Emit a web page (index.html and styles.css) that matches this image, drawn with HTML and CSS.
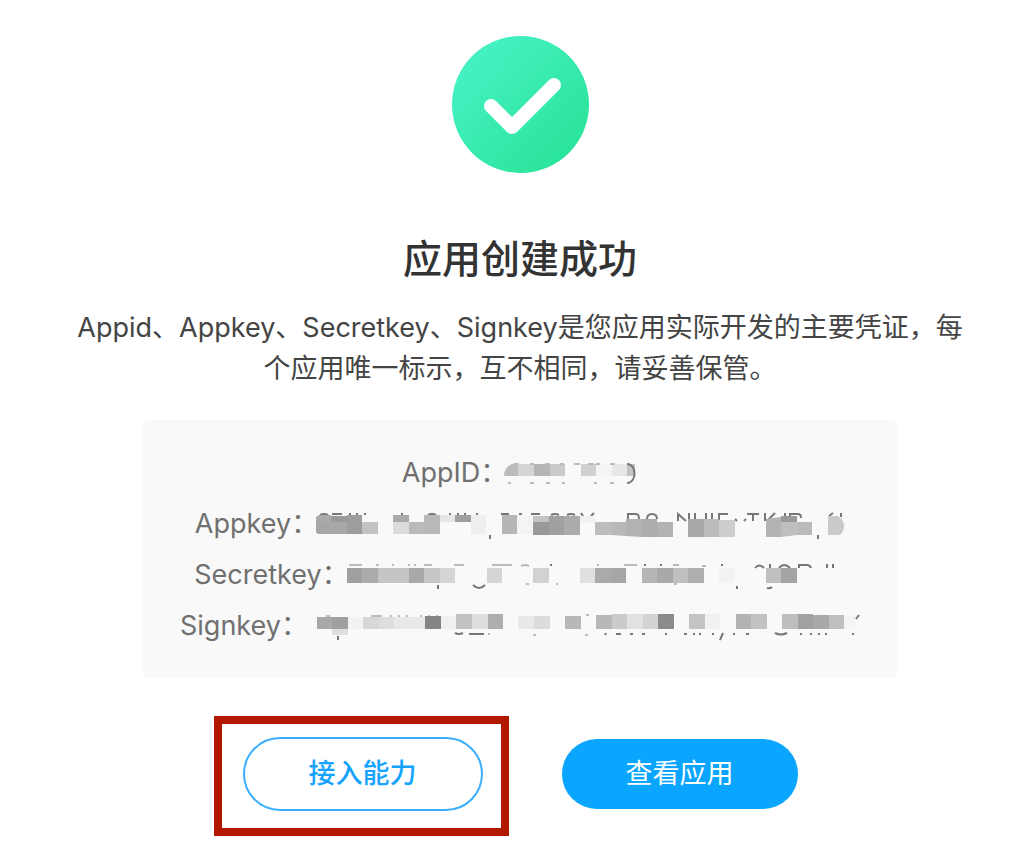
FILE: index.html
```html
<!DOCTYPE html>
<html lang="zh-CN">
<head>
  <meta charset="UTF-8" />
  <meta name="viewport" content="width=device-width, initial-scale=1.0"/>
  <title>应用创建成功</title>
  <link rel="stylesheet" href="styles.css">
</head>
<body>
  <main class="result">
    <svg class="success-icon" viewBox="0 0 137 137" aria-hidden="true">
      <defs>
        <linearGradient id="green" x1="0.1" y1="0.1" x2="0.9" y2="0.9">
          <stop offset="0" stop-color="#46f2c4"/>
          <stop offset="1" stop-color="#29e399"/>
        </linearGradient>
      </defs>
      <circle cx="68.5" cy="68.5" r="68.5" fill="url(#green)"/>
      <path d="M39 70 L60 91 L102 49" fill="none" stroke="#fff" stroke-width="14" stroke-linecap="round" stroke-linejoin="round"/>
    </svg>

    <h1>应用创建成功</h1>
    <p class="desc">Appid、Appkey、Secretkey、Signkey是您应用实际开发的主要凭证，每个应用唯一标示，互不相同，请妥善保管。</p>

    <!-- values are masked -->
    <dl class="keys">
      <div class="key-row">
        <dt>AppID：</dt>
        <dd>
          <svg width="134" height="34" viewBox="0 0 134 34" aria-hidden="true">
            <path d="M0 20 C0 13 5 7 14 7 V20Z" fill="#bbb"/>
            <path d="M14 8h16v12h-16z" fill="#d5d5d5"/>
            <path d="M30 8h16v12h-16z" fill="#b5b5b5"/>
            <path d="M46 8h15v12h-15z" fill="#cacaca"/>
            <path d="M77 8h15v12h-15z" fill="#d0d0d0"/>
            <path d="M92 8h16v12h-16z" fill="#f4f4f4"/>
            <path d="M108 8h15v12h-15z" fill="#e7e7e7"/>
            <path d="M123 8h8v12h-8z" fill="#c4c4c4"/>
            <path class="faint" d="M10 8h5M26 8h4M41 8h5M56 8h4M70 8h6M84 8h6M92 8h4M106 8h5M4 27h3M26 27h4M42 27h4M58 27h3M90 27h3M106 27h4"/>
            <path class="mark" d="M123 8 C133 8 133 27 123 27"/>
          </svg>
        </dd>
      </div>
      <div class="key-row">
        <dt>Appkey：</dt>
        <dd>
          <svg width="530" height="34" viewBox="0 0 530 34" aria-hidden="true">
            <path class="mark" d="M5 8q4-2 8 0M17 7h10M35 6v2M42 6v2M49 7h2M86 7h2M113 8q4-2 8 0M134 7h2M143 6v2M150 6v2M161 7h2M186 7h8M204 7h3M216 7h9M236 8q4-2 8 0M252 8q4-2 8 0M266 6l2 3M279 6l-3 3M313 13V7h8q3 0 3 5M332 12q0-5 5-5t5 5M363 14V7l8 7M374 6v8M380 6v8M391 6v8M397 6v8M404 14V7h9M420 12l2 2M429 14l2-2M432 7h12M438 7v7M450 6v8M460 6l-8 8M470 6v6M475 12V7h8q3 0 3 4M514 9l4-3M526 6v4M175 28v4M503 28v4"/>
            <path d="M1 10l3-2h12v7h-15z" fill="#aaa"/>
            <path d="M1 15h15v12h-12q-3 0-3-3z" fill="#a6a6a6"/>
            <path d="M16 9h16v6h-16z" fill="#9a9a9a"/>
            <path d="M16 15h16v12h-16z" fill="#a8a8a8"/>
            <path d="M32 8h15v19h-15z" fill="#9d9d9d"/>
            <path d="M47 15h16v12h-16z" fill="#c2c2c2"/>
            <path d="M78 8h16v7h-16z" fill="#aaa"/>
            <path d="M78 15h16v12h-16z" fill="#dcdcdc"/>
            <path d="M94 15h15v12h-15z" fill="#bababa"/>
            <path d="M109 8h16v19h-16z" fill="#b9b9b9"/>
            <path d="M125 8h15v7h-15z" fill="#e6e6e6"/>
            <path d="M140 8h16v7h-16z" fill="#9f9f9f"/>
            <path d="M156 8h15v19h-15z" fill="#efefef"/>
            <path d="M187 8h15v19h-15z" fill="#b6b6b6"/>
            <path d="M202 8h16v19h-16z" fill="#f4f4f4"/>
            <path d="M218 9h16v6h-16z" fill="#c4c4c4"/>
            <path d="M218 15h16v13h-16z" fill="#999"/>
            <path d="M234 9h15v19h-15z" fill="#a0a0a0"/>
            <path d="M249 9h16v19h-16z" fill="#ababab"/>
            <path d="M265 9h15v6h-15z" fill="#f1f1f1"/>
            <path d="M280 15h16v13h-16z" fill="#bdbdbd"/>
            <path d="M296 15h15v14l-15-1z" fill="#b8b8b8"/>
            <path d="M311 12h16v18l-16-1z" fill="#b2b2b2"/>
            <path d="M327 12h15v18h-15z" fill="#adadad"/>
            <path d="M342 15h16v15h-16z" fill="#b2b2b2"/>
            <path d="M373 12h16v18h-16z" fill="#a8a8a8"/>
            <path d="M389 12h15v18h-15z" fill="#bcbcbc"/>
            <path d="M404 13h16v17h-16z" fill="#cdcdcd"/>
            <path d="M451 12l15-2v20h-15z" fill="#b3b3b3"/>
            <path d="M466 9h16v6h-16z" fill="#999"/>
            <path d="M466 15h16v13l-16 2z" fill="#bfbfbf"/>
            <path d="M482 15h15v13h-15z" fill="#bababa"/>
            <path d="M513 9h10q6 4 6 10q0 6-4 9h-12z" fill="#cacaca"/>
          </svg>
        </dd>
      </div>
      <div class="key-row">
        <dt>Secretkey：</dt>
        <dd>
          <svg width="500" height="34" viewBox="0 0 500 34" aria-hidden="true">
            <path class="faint" d="M3 7h13M30 7h3M46 7h2M62 7h2M68 7h2M78 7h8M108 7h10M146 7h20M175 8q4-2 8 0M251 7h2M278 7h13M327 7h6M356 8h4M180 26h3M210 26h2M328 26h3"/>
            <path class="mark" d="M205 6v2M299 6v2M315 6v2M376 6v2M409 10q4-5 9 0M424 6v4M433 10q5-6 11 0M453 10V7h8q3 0 4 3M481 6v4M487 6v4M92 27v4M127 27q6 6 12 0M391 28v3M421 30q3 1 5-1"/>
            <path d="M1 10h15v15h-15z" fill="#a0a0a0"/>
            <path d="M16 10h16v15h-16z" fill="#ababab"/>
            <path d="M32 10h31v15h-31z" fill="#c5c5c5"/>
            <path d="M63 10h15v15h-15z" fill="#a9a9a9"/>
            <path d="M78 10h16v15h-16z" fill="#c6c6c6"/>
            <path d="M94 10h15v15h-15z" fill="#d5d5d5"/>
            <path d="M141 10h15v15h-15z" fill="#d4d4d4"/>
            <path d="M187 10h16v15h-16z" fill="#d2d2d2"/>
            <path d="M234 10h15v15h-15z" fill="#e0e0e0"/>
            <path d="M249 10h16v15h-16z" fill="#aaa"/>
            <path d="M265 10h15v15h-15z" fill="#a6a6a6"/>
            <path d="M296 10h15v15h-15z" fill="#b6b6b6"/>
            <path d="M311 10h16v15h-16z" fill="#a9a9a9"/>
            <path d="M327 10h15v15h-15z" fill="#bfbfbf"/>
            <path d="M342 10h16v15h-16z" fill="#afafaf"/>
            <path d="M373 10h16v15h-16z" fill="#f3f3f3"/>
            <path d="M420 10h15v15h-15z" fill="#c0c0c0"/>
            <path d="M435 10h16v15h-16z" fill="#a5a5a5"/>
          </svg>
        </dd>
      </div>
      <div class="key-row">
        <dt>Signkey：</dt>
        <dd>
          <svg width="555" height="34" viewBox="-11 0 555 34" aria-hidden="true">
            <path class="faint" d="M10 7h4M55 7h11M74 7h2M82 7h2M90 7h2M104 7h2M112 7h2M120 7h2M172 25h2M217 26h3M269 26h3M270 6h3"/>
            <path class="mark" d="M22 27v4M139 24q4 2 8 0M153 25h15M289 26l1-2M300 25h5M314 25h3M326 25h3M350 24v2M368 25h3M377 25h2M384 24v2M397 24v2M407 24l-3 7M417 25h2M430 25h3M459 24q6 3 12 0M485 24v2M494 25h2M502 25h2M509 25h2M536 25h2M540 10l3-4"/>
            <path d="M1 8h15v12h-15z" fill="#a8a8a8"/>
            <path d="M16 8h16v12h-16z" fill="#a0a0a0"/>
            <path d="M16 20h16v6h-16z" fill="#dedede"/>
            <path d="M32 8h15v12h-15z" fill="#f3f3f3"/>
            <path d="M47 8h16v12h-16z" fill="#d7d7d7"/>
            <path d="M63 8h15v12h-15z" fill="#dedede"/>
            <path d="M78 8h31v12h-31z" fill="#e8e8e8"/>
            <path d="M109 7h16v13h-16z" fill="#858585"/>
            <path d="M125 7h15v13h-15z" fill="#f0f0f0"/>
            <path d="M140 5h16v15h-16z" fill="#c2c2c2"/>
            <path d="M156 5h16v15h-16z" fill="#dedede"/>
            <path d="M172 5h15v15h-15z" fill="#aeaeae"/>
            <path d="M202 7h16v13h-16z" fill="#e9e9e9"/>
            <path d="M218 7h16v13h-16z" fill="#dcdcdc"/>
            <path d="M249 7h16v13h-16z" fill="#b8b8b8"/>
            <path d="M280 6h16v14h-16z" fill="#b8b8b8"/>
            <path d="M296 5h15v15h-15z" fill="#cbcbcb"/>
            <path d="M311 5h16v15h-16z" fill="#e1e1e1"/>
            <path d="M327 5h15v15h-15z" fill="#d3d3d3"/>
            <path d="M342 5h16v15h-16z" fill="#8b8b8b"/>
            <path d="M373 5h16v15h-16z" fill="#c4c4c4"/>
            <path d="M389 5h15v15h-15z" fill="#f1f1f1"/>
            <path d="M420 5h15v15h-15z" fill="#b3b3b3"/>
            <path d="M435 5h16v15h-16z" fill="#c2c2c2"/>
            <path d="M466 5h16v15h-16z" fill="#bebebe"/>
            <path d="M482 5h15v15h-15z" fill="#a1a1a1"/>
            <path d="M497 6h16v14h-16z" fill="#a8a8a8"/>
            <path d="M513 6h15v14h-15z" fill="#bfbfbf"/>
            <path d="M528 7h11v13h-11z" fill="#f4f4f4"/>
          </svg>
        </dd>
      </div>
    </dl>

    <div class="actions">
      <div class="highlight">
        <button class="btn btn-outline" type="button">接入能力</button>
      </div>
      <button class="btn btn-primary" type="button">查看应用</button>
    </div>
  </main>
</body>
</html>
```

FILE: styles.css
```css
* {
  box-sizing: border-box;
}

body {
  margin: 0;
  background: #fff;
  font-family: Inter, "Noto Sans CJK SC", sans-serif;
  color: #444;
}

.result {
  display: flex;
  flex-direction: column;
  align-items: center;
  padding: 36px 60px 32px 72px;
}

.success-icon {
  width: 137px;
  height: 137px;
}

h1 {
  margin: 58px 0 20px;
  font-size: 39px;
  line-height: 56px;
  font-weight: 500;
  color: #333;
}

.desc {
  margin: 0 0 31px;
  font-size: 27px;
  line-height: 41px;
  text-align: center;
}

.keys {
  width: 100%;
  max-width: 756px;
  margin: 0 0 59px;
  padding: 27px 0;
  background: #f9f9f9;
  border-radius: 8px;
}

.key-row {
  display: flex;
  justify-content: center;
  align-items: center;
  font-size: 27px;
  line-height: 51px;
  color: #707070;
}

/* the full-width colon already leaves space on its right */
.key-row dd {
  display: flex;
  margin: 0 0 0 -3px;
}

.mark,
.faint {
  fill: none;
  stroke: #777;
  stroke-width: 2;
}

.faint {
  stroke: #bbb;
}

.actions {
  display: flex;
  align-items: center;
  gap: 79px;
}

.btn {
  display: block;
  padding: 0 64px;
  border: none;
  border-radius: 37px;
  font-family: inherit;
  font-size: 27px;
  line-height: 70px;
  cursor: pointer;
}

.btn-outline {
  background: #fff;
  border: 2px solid #3aaeff;
  color: #16a3ff;
  font-weight: 500;
}

.btn-primary {
  background: #0aa5ff;
  color: #fff;
}

/* red frame around the button to press */
.highlight {
  position: relative;
}

.highlight::after {
  content: "";
  position: absolute;
  inset: -21px -26px -25px -29px;
  border: 8px solid #b21800;
  pointer-events: none;
}
```
